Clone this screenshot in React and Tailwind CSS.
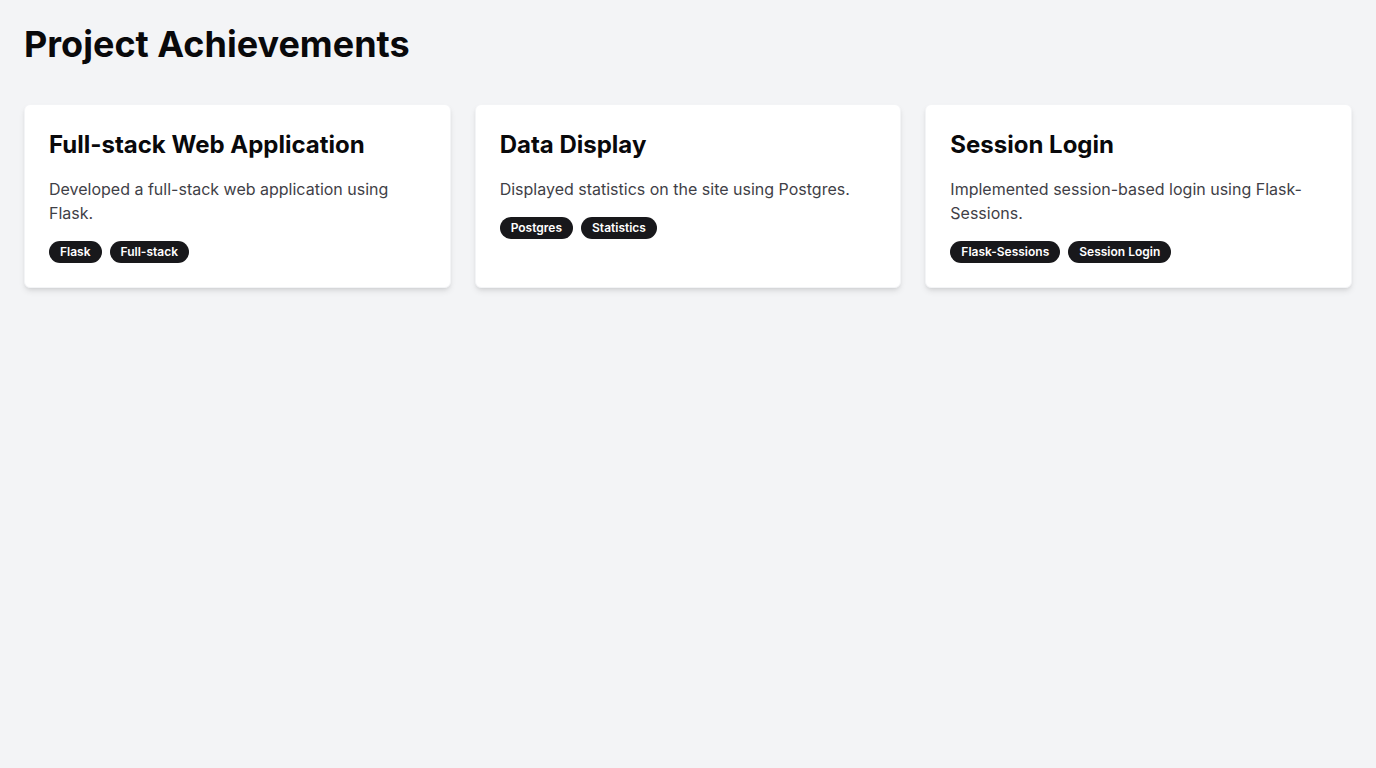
const achievements = [
  {
    title: "Full-stack Web Application",
    desc: "Developed a full-stack web application using Flask.",
    tags: ["Flask", "Full-stack"],
  },
  {
    title: "Data Display",
    desc: "Displayed statistics on the site using Postgres.",
    tags: ["Postgres", "Statistics"],
  },
  {
    title: "Session Login",
    desc: "Implemented session-based login using Flask-Sessions.",
    tags: ["Flask-Sessions", "Session Login"],
  },
];

export default function App() {
  return (
    <div
      className="min-h-screen w-full bg-gray-100 p-6"
      style={{ fontFamily: "Inter, 'Noto Sans', sans-serif" }}
    >
      <h1 className="text-4xl font-bold text-zinc-950 mb-10">Project Achievements</h1>

      <div className="grid grid-cols-3 gap-6">
        {achievements.map((item) => (
          <div
            key={item.title}
            className="bg-white rounded-md border border-gray-100 shadow-md p-6"
          >
            <h2 className="text-2xl font-bold text-zinc-950 mb-4">{item.title}</h2>
            <p className="text-base text-zinc-700 mb-4">{item.desc}</p>
            <div className="flex flex-wrap gap-2">
              {item.tags.map((tag) => (
                <span
                  key={tag}
                  className="inline-flex items-center rounded-full border border-transparent bg-zinc-900 px-2.5 py-0.5 text-xs font-semibold text-white"
                >
                  {tag}
                </span>
              ))}
            </div>
          </div>
        ))}
      </div>
    </div>
  );
}
